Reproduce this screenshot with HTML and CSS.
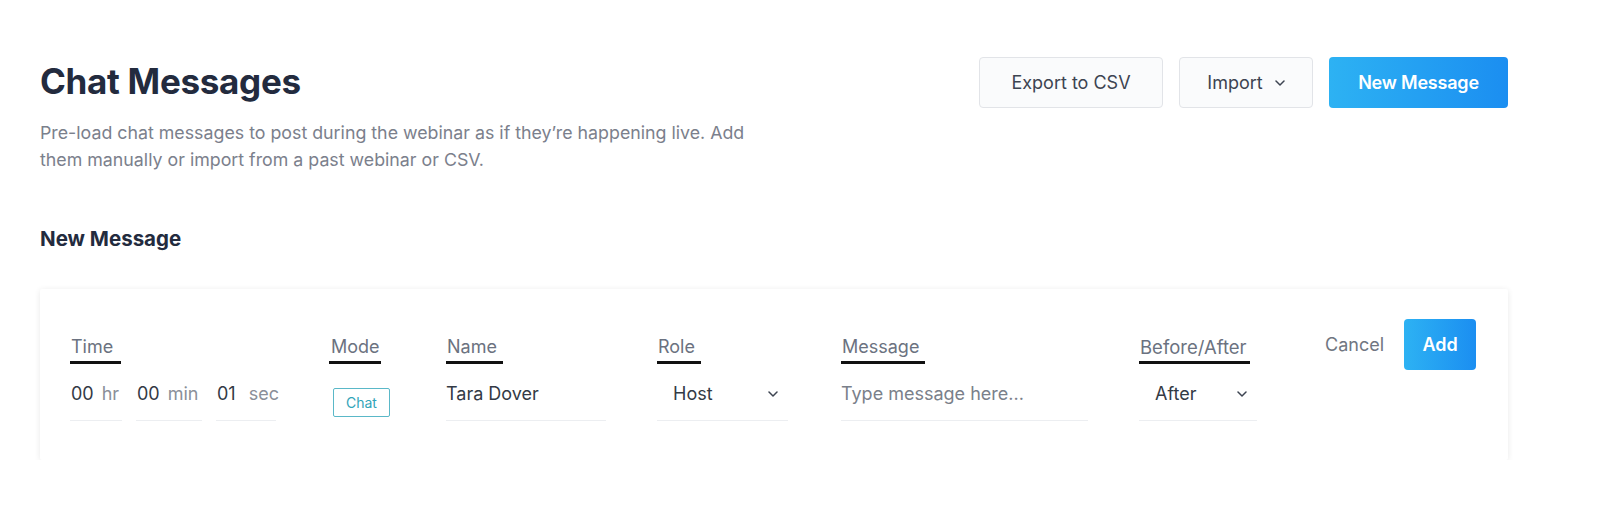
FILE: index.html
```html
<!DOCTYPE html>
<html lang="en">
<head>
<meta charset="utf-8">
<title>Chat Messages</title>
<link rel="stylesheet" href="styles.css">
</head>
<body>
<div class="page">
  <header class="header">
    <div class="intro">
      <h1 class="title">Chat Messages</h1>
      <p class="desc">Pre-load chat messages to post during the webinar as if they’re happening live. Add them manually or import from a past webinar or CSV.</p>
    </div>
    <div class="actions">
      <button class="btn btn-outline btn-export">Export to CSV</button>
      <button class="btn btn-outline btn-import">Import <svg class="chev" width="10" height="6" viewBox="0 0 10 6"><path d="M1 1l4 4 4-4" fill="none" stroke="#3d4451" stroke-width="1.5" stroke-linecap="round" stroke-linejoin="round"/></svg></button>
      <button class="btn btn-primary btn-new">New Message</button>
    </div>
  </header>

  <h2 class="section-title">New Message</h2>

  <div class="card">
    <div class="field f-time">
      <span class="label">Time</span>
      <div class="time-row">
        <div class="seg seg-hr"><span class="val">00</span><span class="unit">hr</span></div>
        <div class="seg seg-min"><span class="val">00</span><span class="unit">min</span></div>
        <div class="seg seg-sec"><span class="val">01</span><span class="unit">sec</span></div>
      </div>
    </div>
    <div class="field f-mode">
      <span class="label">Mode</span>
      <div class="mode-row"><span class="badge">Chat</span></div>
    </div>
    <div class="field f-name">
      <span class="label">Name</span>
      <div class="input w-name">Tara Dover</div>
    </div>
    <div class="field f-role">
      <span class="label">Role</span>
      <div class="input select w-role"><span>Host</span><svg class="chev" width="10" height="6" viewBox="0 0 10 6"><path d="M1 1l4 4 4-4" fill="none" stroke="#3d4451" stroke-width="1.5" stroke-linecap="round" stroke-linejoin="round"/></svg></div>
    </div>
    <div class="field f-msg">
      <span class="label">Message</span>
      <div class="input placeholder w-msg">Type message here...</div>
    </div>
    <div class="field f-ba">
      <span class="label">Before/After</span>
      <div class="input select w-ba"><span>After</span><svg class="chev" width="10" height="6" viewBox="0 0 10 6"><path d="M1 1l4 4 4-4" fill="none" stroke="#3d4451" stroke-width="1.5" stroke-linecap="round" stroke-linejoin="round"/></svg></div>
    </div>
    <div class="card-actions">
      <button class="link-btn">Cancel</button>
      <button class="btn btn-primary btn-add">Add</button>
    </div>
  </div>
</div>
</body>
</html>
```

FILE: styles.css
```css
* { box-sizing: border-box; }
html, body { margin: 0; padding: 0; background: #ffffff; }
body {
  font-family: Inter, "Noto Sans", "Liberation Sans", sans-serif;
  color: #333a45;
}
.page {
  width: 1468px;
  margin-left: 40px;
  padding-top: 57px;
}
.header {
  display: flex;
  justify-content: space-between;
  align-items: flex-start;
}
.title {
  margin: 4px 0 0;
  font-size: 35px;
  line-height: 40px;
  font-weight: 700;
  color: #232b3e;
  letter-spacing: -0.3px;
}
.desc {
  margin: 18px 0 0;
  width: 745px;
  font-size: 17.8px;
  line-height: 27px;
  color: #7b808c;
}
.actions {
  display: flex;
  gap: 16px;
}
.btn {
  font-family: inherit;
  height: 51px;
  border-radius: 4px;
  font-size: 18px;
  cursor: pointer;
  display: inline-flex;
  align-items: center;
  justify-content: center;
  gap: 12px;
  padding: 0;
}
.btn-outline {
  background: #fafbfc;
  border: 1px solid #e2e4e8;
  color: #3d4451;
}
.btn-export { width: 184px; }
.btn-import { width: 134px; }
.btn-primary {
  border: none;
  color: #ffffff;
  font-weight: 600;
  background: linear-gradient(90deg, #2db2f3 0%, #1b8ef1 100%);
}
.btn-new { width: 179px; letter-spacing: -0.2px; }
.section-title {
  margin: 53px 0 0;
  font-size: 20.5px;
  line-height: 26px;
  font-weight: 700;
  color: #232b3e;
}
.card {
  margin-top: 37px;
  background: #ffffff;
  box-shadow: 0 1px 6px rgba(0, 0, 0, 0.09);
  border-radius: 2px;
  padding: 30px 30px 39px 30px;
  display: grid;
  grid-template-columns: 261px 115px 211px 184px 298px 183px 1fr;
  align-items: start;
}
.field {
  padding-top: 16px;
  display: flex;
  flex-direction: column;
  align-items: flex-start;
}
.label {
  display: inline-block;
  font-size: 18px;
  line-height: 24px;
  color: #6b7280;
  padding: 0 6px 2px 1px;
  border-bottom: 3px solid #111111;
}
.f-time .label { padding-right: 8px; }
.f-ba .label { font-size: 18.5px; padding-right: 3px; }
.f-mode .label { margin-left: -2px; padding-left: 2px; padding-right: 1px; }
.input {
  margin-top: 18px;
  font-size: 18px;
  line-height: 24px;
  padding-bottom: 14px;
  border-bottom: 1px solid #eceef1;
  color: #333a45;
  white-space: nowrap;
}
.placeholder { color: #7a808a; }
.w-name { width: 160px; }
.w-role { width: 131px; }
.w-msg { width: 247px; }
.w-ba { width: 118px; }
.select {
  display: flex;
  align-items: center;
  justify-content: space-between;
  padding-left: 16px;
  padding-right: 10px;
}
.time-row {
  margin-top: 18px;
  display: flex;
  gap: 14px;
}
.seg {
  display: flex;
  gap: 8px;
  font-size: 18px;
  line-height: 24px;
  padding-bottom: 14px;
  padding-left: 1px;
  border-bottom: 1px solid #eceef1;
}
.seg-hr { width: 52px; }
.seg-min { width: 66px; }
.seg-sec { width: 60px; gap: 13px; }
.val { color: #333a45; }
.unit { color: #8a8f99; }
.mode-row {
  margin-top: 24px;
  padding-left: 2px;
}
.badge {
  display: inline-block;
  font-size: 14px;
  line-height: 27px;
  padding: 0 12px;
  border: 1px solid #5ab8c8;
  border-radius: 2px;
  color: #31a4b8;
}
.card-actions {
  display: flex;
  align-items: center;
  gap: 20px;
  padding-left: 3px;
}
.link-btn {
  font-family: inherit;
  background: none;
  border: none;
  padding: 0;
  font-size: 18px;
  color: #707681;
  cursor: pointer;
}
.btn-add { width: 72px; }
.chev { display: block; }
```
